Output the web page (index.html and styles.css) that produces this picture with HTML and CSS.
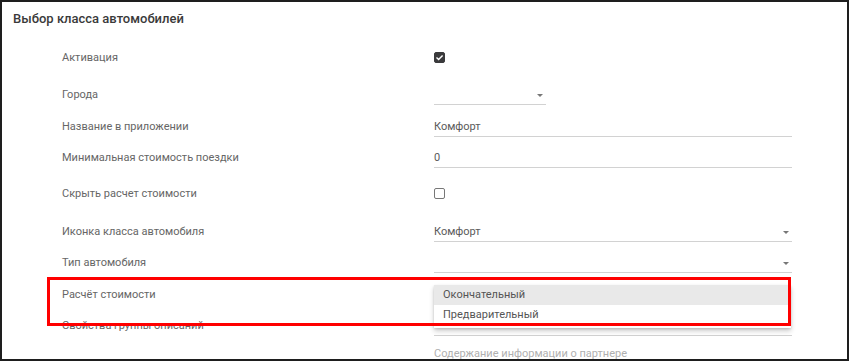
FILE: index.html
```html
<!DOCTYPE html>
<html lang="ru">
<head>
    <meta charset="UTF-8">
    <title>car_classes</title>
    <link rel="stylesheet" href="styles.css">
</head>
<body>
<div id="frame">
    <div class="title">Выбор класса автомобилей</div>
    <div class="form">
        <div class="row h37">
            <div class="label">Активация</div>
            <div class="value"><span class="checkbox checked">
                <svg width="9" height="9" viewBox="0 0 9 9"><path d="M1.5 4.6 L3.6 6.6 L7.6 2.4" fill="none" stroke="#fff" stroke-width="1.4"/></svg>
            </span></div>
        </div>
        <div class="row h32">
            <div class="label">Города</div>
            <div class="value"><div class="field select short"><span></span><i class="arrow"></i></div></div>
        </div>
        <div class="row h31">
            <div class="label">Название в приложении</div>
            <div class="value"><div class="field">Комфорт</div></div>
        </div>
        <div class="row h36">
            <div class="label">Минимальная стоимость поездки</div>
            <div class="value"><div class="field">0</div></div>
        </div>
        <div class="row h38">
            <div class="label">Скрыть расчет стоимости</div>
            <div class="value"><span class="checkbox"></span></div>
        </div>
        <div class="row h31">
            <div class="label">Иконка класса автомобиля</div>
            <div class="value"><div class="field select"><span>Комфорт</span><i class="arrow"></i></div></div>
        </div>
        <div class="row h32">
            <div class="label">Тип автомобиля</div>
            <div class="value"><div class="field select"><span></span><i class="arrow"></i></div></div>
        </div>
        <div class="row h31">
            <div class="label">Расчёт стоимости</div>
            <div class="value">
                <div class="menu">
                    <div class="item active">Окончательный</div>
                    <div class="item">Предварительный</div>
                </div>
            </div>
        </div>
        <div class="row h28">
            <div class="label">Свойства группы описаний</div>
            <div class="value"><div class="field"></div></div>
        </div>
        <div class="row">
            <div class="label"></div>
            <div class="value"><div class="placeholder">Содержание информации о партнере</div></div>
        </div>
    </div>
    <div class="highlight"></div>
</div>
</body>
</html>
```
FILE: styles.css
```css
body {
    margin: 0;
    font-family: Roboto, "Liberation Sans", sans-serif;
    background: #fff;
}

#frame {
    position: relative;
    box-sizing: border-box;
    width: 849px;
    height: 361px;
    border: 2px solid #1e1e1e;
    overflow: hidden;
    background: #fff;
}

.title {
    padding: 8px 0 0 11px;
    height: 39px;
    line-height: 18px;
    font-size: 13px;
    font-weight: 500;
    color: #3a3a3a;
}

.form {
    padding-left: 60px;
}

.row {
    display: flex;
    align-items: flex-start;
    height: 31px;
}

.h28 { height: 28px; }
.h31 { height: 31px; }
.h32 { height: 32px; }
.h36 { height: 36px; }
.h37 { height: 37px; }
.h38 { height: 38px; }

.label {
    width: 372px;
    line-height: 18px;
    font-size: 11px;
    color: #666;
}

.value {
    position: relative;
    width: 358px;
    font-size: 11px;
    color: #5a5a5a;
}

.field {
    height: 18px;
    line-height: 18px;
    border-bottom: 1px solid #d2d2d2;
}

.select {
    display: flex;
    justify-content: space-between;
    align-items: center;
}

.short {
    width: 112px;
}

.arrow {
    width: 0;
    height: 0;
    margin-right: 3px;
    border-left: 3.5px solid transparent;
    border-right: 3.5px solid transparent;
    border-top: 3.5px solid #777;
}

.checkbox {
    display: flex;
    align-items: center;
    justify-content: center;
    box-sizing: border-box;
    width: 11px;
    height: 11px;
    margin-top: 3px;
    border: 1.5px solid #777;
    border-radius: 2px;
}

.checkbox.checked {
    background: #3a3a3c;
    border-color: #3a3a3c;
}

.placeholder {
    line-height: 18px;
    color: #b0b0b0;
}

.menu {
    position: absolute;
    top: -1px;
    left: 0;
    width: 357px;
    padding: 0 0 3px;
    background: #fff;
    box-shadow: 0 3px 5px rgba(0, 0, 0, 0.2), 0 1px 2px rgba(0, 0, 0, 0.12);
    z-index: 2;
}

.item {
    height: 20px;
    line-height: 20px;
    padding-left: 9px;
    color: #555;
}

.item.active {
    background: #e9e9e9;
}

.highlight {
    position: absolute;
    left: 45px;
    top: 275px;
    width: 738px;
    height: 43px;
    border: 3px solid #f00;
    z-index: 3;
}
```
